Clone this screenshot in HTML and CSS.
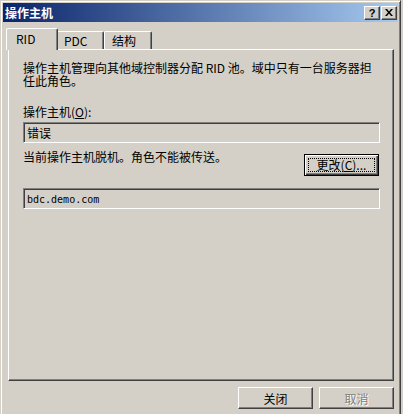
FILE: index.html
```html
<!DOCTYPE html>
<html lang="zh-CN">
  <head>
    <meta charset="UTF-8" />
    <title>操作主机</title>
    <link rel="stylesheet" href="styles.css">
  </head>
  <body>
    <div class="window">
      <div class="titlebar">
        <span class="title">操作主机</span>
        <div class="caption-buttons">
          <span class="cap-btn help">?</span>
          <span class="cap-btn close">
            <svg width="8" height="7" viewBox="0 0 8 7">
              <path d="M0 0h2l2 2.5L6 0h2L5 3.5 8 7H6L4 4.5 2 7H0l3-3.5z" fill="#000" />
            </svg>
          </span>
        </div>
      </div>

      <div class="content">
        <div class="tabs">
          <div class="tab selected">RID</div>
          <div class="tab">PDC</div>
          <div class="tab">结构</div>
        </div>

        <div class="panel">
          <p class="description">
            操作主机管理向其他域控制器分配 RID 池。域中只有一台服务器担任此角色。
          </p>

          <label class="field-label">操作主机(<u>O</u>):</label>
          <div class="textbox">错误</div>

          <div class="status-row">
            <span class="status">当前操作主机脱机。角色不能被传送。</span>
            <button class="btn default"><span class="focus">更改(<u>C</u>)...</span></button>
          </div>

          <div class="textbox mono">bdc.demo.com</div>
        </div>

        <div class="footer">
          <button class="btn">关闭</button>
          <button class="btn disabled">取消</button>
        </div>
      </div>
    </div>
  </body>
</html>
```

FILE: styles.css
```css
* {
  margin: 0;
  padding: 0;
  box-sizing: border-box;
}

body {
  background: #d4d0c8;
  color: #000;
  font-family: "Noto Sans CJK SC", "Liberation Sans", sans-serif;
  font-size: 12px;
  line-height: 13px;
  overflow: hidden;
}

.window {
  width: 401px;
  height: 430px;
  padding: 2px;
  border: 1px solid;
  border-color: #d4d0c8 #404040 #404040 #d4d0c8;
  box-shadow: inset 1px 1px #fff, inset -1px -1px #808080;
}

/* title bar */
.titlebar {
  height: 19px;
  display: flex;
  align-items: center;
  justify-content: space-between;
  padding: 0 1px 0 2px;
  background: linear-gradient(to right, #0a246a, #a6caf0);
}

.title {
  color: #fff;
  font-weight: bold;
  line-height: 19px;
}

.caption-buttons {
  display: flex;
  gap: 1px;
}

.cap-btn {
  width: 16px;
  height: 14px;
  display: flex;
  align-items: center;
  justify-content: center;
  background: #d4d0c8;
  border: 1px solid;
  border-color: #fff #404040 #404040 #fff;
  box-shadow: inset -1px -1px #808080;
}

.cap-btn.help {
  font-family: "Liberation Sans", sans-serif;
  font-weight: bold;
  font-size: 11px;
  line-height: 12px;
}

/* dialog body */
.content {
  padding: 6px 4px 0 5px;
}

.tabs {
  display: flex;
  align-items: flex-end;
  height: 22px;
  margin-bottom: -1px;
  position: relative;
  z-index: 1;
}

.tab {
  width: 48px;
  height: 18px;
  margin-bottom: 1px;
  padding: 2px 0 0 7px;
  background: #d4d0c8;
  border: 1px solid;
  border-color: #fff #404040 transparent #fff;
  border-bottom: none;
  border-radius: 2px 2px 0 0;
  box-shadow: inset -1px 0 #808080;
  line-height: 14px;
}

.tab.selected {
  width: 52px;
  height: 22px;
  margin: 0 -2px;
  padding: 3px 0 0 9px;
  position: relative;
  z-index: 2;
}

.panel {
  height: 332px;
  padding: 11px 13px 0 14px;
  border: 1px solid;
  border-color: #fff #404040 #404040 #fff;
  box-shadow: inset -1px -1px #808080;
}

.description {
  width: 357px;
}

.field-label {
  display: block;
  margin-top: 18px;
}

.textbox {
  height: 21px;
  margin-top: 4px;
  padding: 3px 3px 0;
  border: 1px solid;
  border-color: #808080 #fff #fff #808080;
  box-shadow: inset 1px 1px #404040, inset -1px -1px #d4d0c8;
  background: #d4d0c8;
}

.textbox.mono {
  margin-top: 12px;
  padding-top: 4px;
  font-family: "DejaVu Sans Mono", monospace;
  font-size: 10px;
}

.status-row {
  display: flex;
  justify-content: space-between;
  align-items: flex-start;
  margin-top: 7px;
}

.status-row .btn {
  margin-top: 4px;
  margin-right: 1px;
}

/* push buttons */
.btn {
  width: 75px;
  height: 22px;
  display: flex;
  align-items: center;
  justify-content: center;
  background: #d4d0c8;
  font: inherit;
  color: #000;
  border: 1px solid;
  border-color: #fff #404040 #404040 #fff;
  box-shadow: inset -1px -1px #808080;
}

.btn.default {
  border-color: #000;
  box-shadow: inset 1px 1px #fff, inset -1px -1px #404040, inset -2px -2px #808080;
}

.btn .focus {
  width: 67px;
  height: 14px;
  border: 1px dotted #000;
  line-height: 12px;
}

.btn.disabled {
  color: #808080;
  text-shadow: 1px 1px #fff;
}

.footer {
  display: flex;
  justify-content: flex-end;
  gap: 6px;
  padding-top: 6px;
}
```
